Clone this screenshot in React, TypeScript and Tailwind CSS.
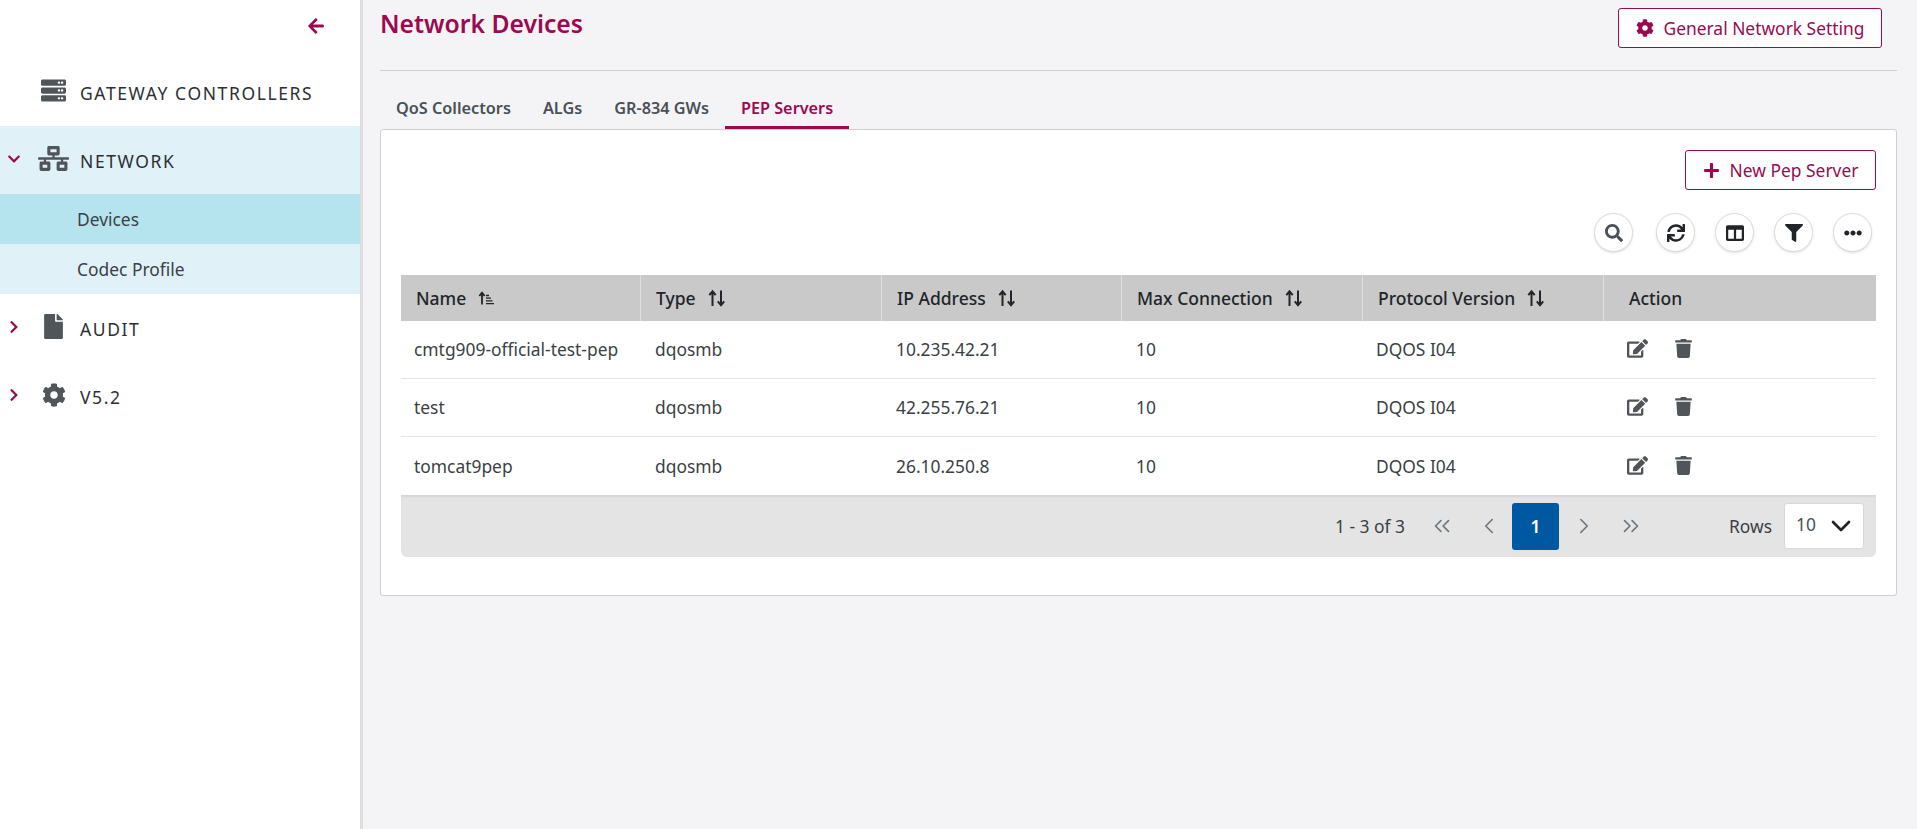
import { ReactNode } from "react"
import {
  FaArrowLeft,
  FaChevronDown,
  FaChevronRight,
  FaColumns,
  FaCog,
  FaEdit,
  FaEllipsisH,
  FaFile,
  FaFilter,
  FaNetworkWired,
  FaPlus,
  FaSearch,
  FaServer,
  FaSync,
  FaTrash,
} from "react-icons/fa"
import { ChevronDown, ChevronLeft, ChevronRight, ChevronsLeft, ChevronsRight } from "lucide-react"

const rows = [
  { name: "cmtg909-official-test-pep", type: "dqosmb", ip: "10.235.42.21", max: "10", version: "DQOS I04" },
  { name: "test", type: "dqosmb", ip: "42.255.76.21", max: "10", version: "DQOS I04" },
  { name: "tomcat9pep", type: "dqosmb", ip: "26.10.250.8", max: "10", version: "DQOS I04" },
]

const columns = ["Type", "IP Address", "Max Connection", "Protocol Version"]
const colWidths = ["w-[240px]", "w-[241px]", "w-[240px]", "w-[241px]", "w-[241px]", "flex-1"]

function SortIcon() {
  return (
    <svg width="18" height="19" viewBox="0 0 18 19" className="ml-[12px] shrink-0 text-[#212529]">
      <path d="M4.500 17V3M1.300 6.200 4.500 2.300l3.200 3.900" fill="none" stroke="currentColor" strokeWidth="2" />
      <path d="M13 1.500v14M9.800 12.300l3.200 3.900 3.200-3.900" fill="none" stroke="currentColor" strokeWidth="2" />
    </svg>
  )
}

function SortedIcon() {
  return (
    <svg width="17" height="14" viewBox="0 0 17 14" className="ml-[12px] shrink-0 text-[#212529]">
      <path d="M4 13.500V2.500M1.300 5 4 1.600 6.700 5" fill="none" stroke="currentColor" strokeWidth="1.800" />
      <path d="M8 4.500h3M8 7.200h5M8 9.900h6.500M8 12.600h8" fill="none" stroke="currentColor" strokeWidth="1.300" />
    </svg>
  )
}

function NavRow({ icon, label, chevron, bg }: { icon: ReactNode; label: string; chevron?: "down" | "right"; bg?: string }) {
  return (
    <div className={`flex h-[68px] items-center ${bg ?? ""}`}>
      <div className="mb-[3px] flex w-[27px] justify-center text-[#9b0a50]">
        {chevron === "down" && <FaChevronDown size={14} />}
        {chevron === "right" && <FaChevronRight size={14} />}
      </div>
      <div className="mb-[3px] flex w-[53px] justify-center text-[#50555a]">{icon}</div>
      <span className="pt-[2px] text-[17.5px] tracking-[1.6px] text-[#2b2f33]">{label}</span>
    </div>
  )
}

function OutlineButton({ icon, label, className }: { icon: ReactNode; label: string; className: string }) {
  return (
    <button className={`flex h-[40px] items-center justify-center gap-[10px] rounded-[3px] border border-[#9b0a50] bg-white text-[17.4px] text-[#9b0a50] ${className}`}>
      {icon}
      {label}
    </button>
  )
}

function CircleButton({ children, className }: { children: ReactNode; className?: string }) {
  return (
    <div className={`flex h-[39px] w-[39px] items-center justify-center rounded-full border border-[#dcdcdc] bg-white shadow-sm ${className ?? ""}`}>
      {children}
    </div>
  )
}

export default function App() {
  return (
    <div className="flex min-h-[829px] bg-[#f4f4f6] font-['Noto_Sans',sans-serif]">
      {/* Sidebar */}
      <aside className="w-[363px] shrink-0 border-r-[3px] border-[#dedee1] bg-white">
        <div className="flex h-[58px] justify-end pr-[35px] pt-[17px] text-[#9b0a50]">
          <FaArrowLeft size={18} />
        </div>
        <NavRow icon={<FaServer size={25} />} label="GATEWAY CONTROLLERS" />
        <NavRow icon={<FaNetworkWired size={31} />} label="NETWORK" chevron="down" bg="bg-[#e1f1f8]" />
        <div className="flex h-[50px] items-center bg-[#b6e4ee] pl-[77px] text-[17.4px] text-[#3a4046]">Devices</div>
        <div className="flex h-[50px] items-center bg-[#e1f1f8] pl-[77px] text-[17.4px] text-[#3a4046]">Codec Profile</div>
        <NavRow icon={<FaFile size={25} />} label="AUDIT" chevron="right" />
        <NavRow icon={<FaCog size={24} />} label="V5.2" chevron="right" />
      </aside>

      {/* Main */}
      <main className="min-w-0 flex-1 pl-[17px] pr-[20px]">
        <div className="flex h-[71px] items-start justify-between border-b border-[#cfcfd2] pr-[15px]">
          <h1 className="mt-[6px] text-[24.7px] font-semibold leading-[36px] text-[#9b0a50]">Network Devices</h1>
          <OutlineButton icon={<FaCog size={18} />} label="General Network Setting" className="mt-[8px] w-[264px]" />
        </div>

        {/* Tabs */}
        <div className="mt-[22px] flex text-[16.25px] font-semibold leading-[20px] text-[#495057]">
          <div className="px-[16px] pb-[11px] pt-[5px]">QoS Collectors</div>
          <div className="px-[16px] pb-[11px] pt-[5px]">ALGs</div>
          <div className="px-[16px] pb-[11px] pt-[5px]">GR-834 GWs</div>
          <div className="border-b-[3px] border-[#9b0a50] px-[16px] pb-[8px] pt-[5px] text-[#9b0a50]">PEP Servers</div>
        </div>

        {/* Card */}
        <div className="rounded-[3px] border border-[#cfcfd2] bg-white px-[20px] pb-[38px] pt-[20px]">
          <div className="flex justify-end">
            <OutlineButton icon={<FaPlus size={17} />} label="New Pep Server" className="w-[191px]" />
          </div>

          <div className="mt-[23px] flex justify-end gap-[20px] pr-[4px]">
            <CircleButton className="mr-[3px]">
              <FaSearch size={18} className="text-[#495057]" />
            </CircleButton>
            <CircleButton>
              <FaSync size={18} className="text-[#212529]" />
            </CircleButton>
            <CircleButton>
              <FaColumns size={18} className="text-[#212529]" />
            </CircleButton>
            <CircleButton>
              <FaFilter size={18} className="text-[#212529]" />
            </CircleButton>
            <CircleButton>
              <FaEllipsisH size={18} className="text-[#212529]" />
            </CircleButton>
          </div>

          {/* Table */}
          <div className="mt-[23px]">
            <div className="flex h-[46px] items-center bg-[#c9c9c9] text-[17.5px] font-medium text-[#212529]">
              <div className={`flex h-full items-center border-r border-[#dedede] pl-[15px] ${colWidths[0]}`}>
                Name
                <SortedIcon />
              </div>
              {columns.map((col, i) => (
                <div key={col} className={`flex h-full items-center border-r border-[#dedede] pl-[15px] ${colWidths[i + 1]}`}>
                  {col}
                  <SortIcon />
                </div>
              ))}
              <div className="flex-1 pl-[25px]">Action</div>
            </div>

            {rows.map((row, i) => (
              <div key={row.name} className={`flex h-[58px] items-center text-[17.4px] text-[#3a3f44] ${i < 2 ? "border-b border-[#e4e4e4]" : ""}`}>
                <div className={`pl-[13px] ${colWidths[0]}`}>{row.name}</div>
                <div className={`pl-[14px] ${colWidths[1]}`}>{row.type}</div>
                <div className={`pl-[14px] ${colWidths[2]}`}>{row.ip}</div>
                <div className={`pl-[14px] ${colWidths[3]}`}>{row.max}</div>
                <div className={`pl-[13px] ${colWidths[4]}`}>{row.version}</div>
                <div className="flex flex-1 items-center gap-[26px] pb-[2px] pl-[23px] text-[#50555a]">
                  <FaEdit size={21} />
                  <FaTrash size={19} />
                </div>
              </div>
            ))}

            {/* Paginator */}
            <div className="flex h-[62px] items-center justify-end rounded-b-[6px] bg-[#e4e4e4] pr-[12px] text-[17.4px] text-[#3a3f44] shadow-[inset_0_2px_2px_rgba(0,0,0,0.06)]">
              <span className="mr-[13px]">1 - 3 of 3</span>
              <div className="flex w-[47px] justify-center text-[#6c757d]">
                <ChevronsLeft size={26} strokeWidth={1.5} />
              </div>
              <div className="flex w-[47px] justify-center text-[#6c757d]">
                <ChevronLeft size={26} strokeWidth={1.5} />
              </div>
              <div className="flex h-[47px] w-[47px] items-center justify-center rounded-[3px] bg-[#0058a3] font-semibold text-white">1</div>
              <div className="ml-[1px] flex w-[47px] justify-center text-[#6c757d]">
                <ChevronRight size={26} strokeWidth={1.5} />
              </div>
              <div className="flex w-[47px] justify-center text-[#6c757d]">
                <ChevronsRight size={26} strokeWidth={1.5} />
              </div>
              <span className="ml-[75px] mr-[12px]">Rows</span>
              <div className="flex h-[46px] w-[80px] items-center justify-between rounded-[3px] border border-[#d8d8d8] bg-white pl-[11px] pr-[6px] text-[#495057]">
                <span className="pb-[3px]">10</span>
                <ChevronDown size={32} strokeWidth={2} className="text-[#212529]" />
              </div>
            </div>
          </div>
        </div>
      </main>
    </div>
  )
}
